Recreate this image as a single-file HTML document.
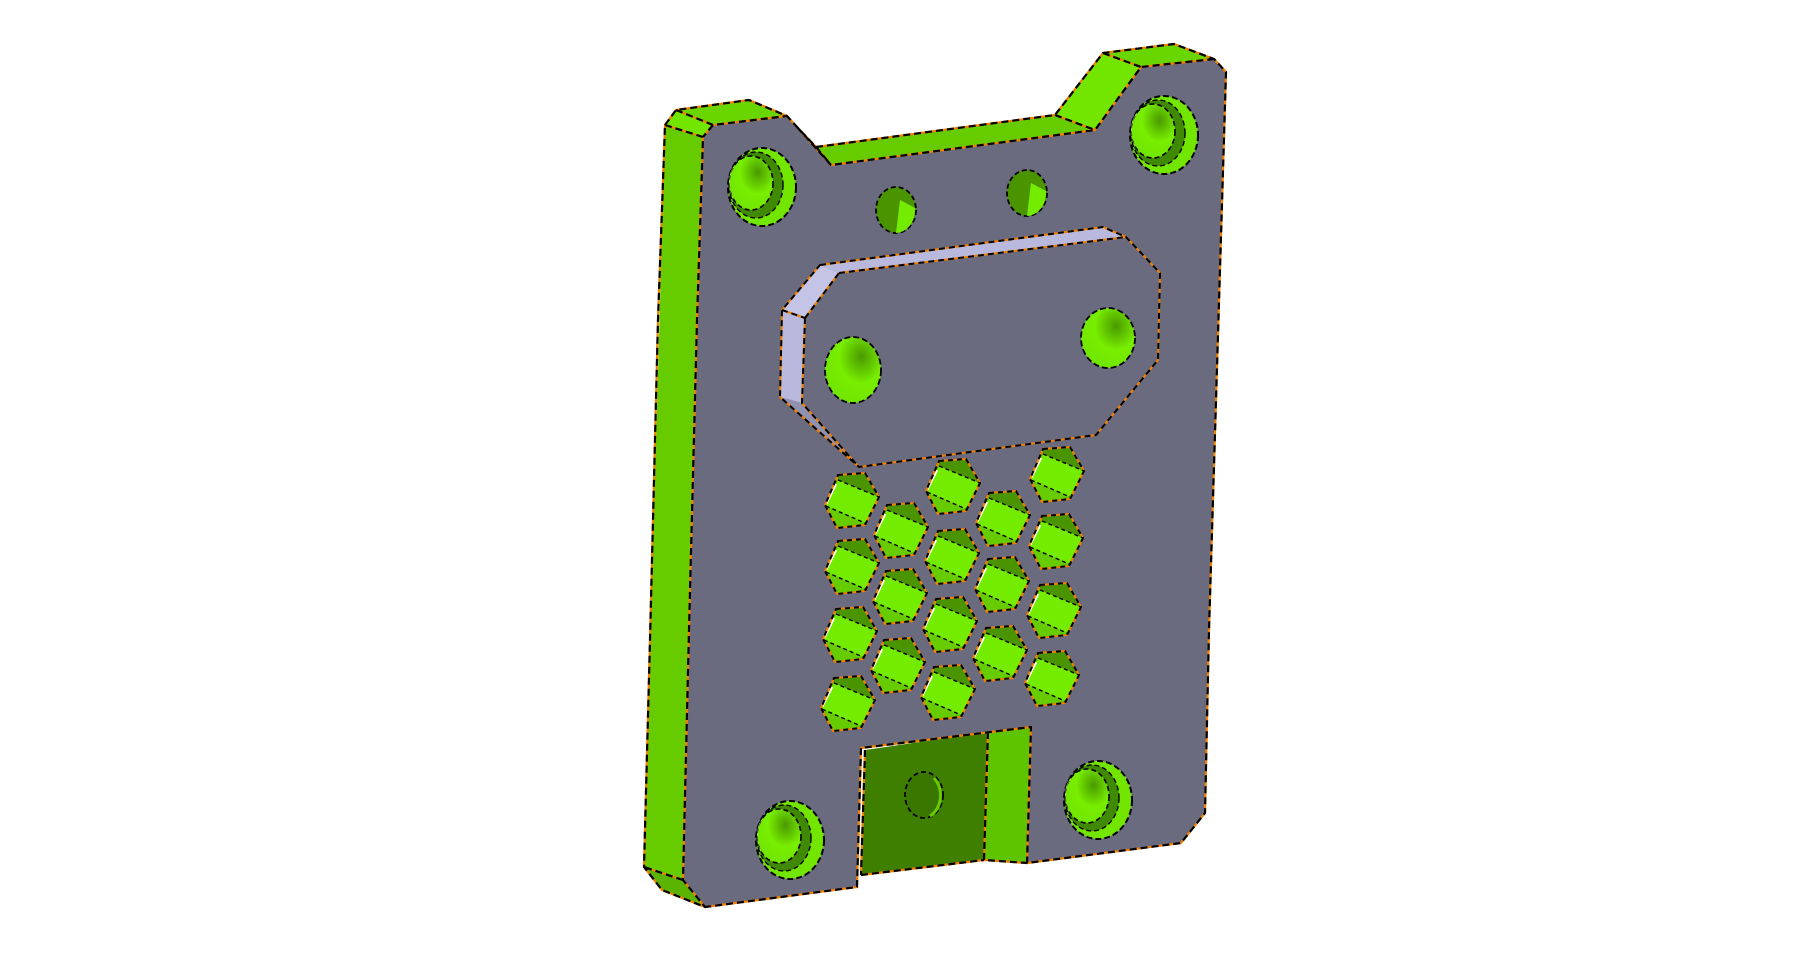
<!DOCTYPE html>
<html><head><meta charset="utf-8"><style>html,body{margin:0;padding:0;background:#fff;}svg{display:block}</style></head>
<body>
<svg width="1820" height="962" viewBox="0 0 1820 962" xmlns="http://www.w3.org/2000/svg">
<defs>
<radialGradient id="hg" cx="0.65" cy="0.3" r="0.8"><stop offset="0" stop-color="#4a9a00"/><stop offset="0.5" stop-color="#78ee00"/><stop offset="1" stop-color="#70e400"/></radialGradient>
<g id="hex">
<polygon points="-14,-25 13,-27 27,-3 13,25 -15,28 -27,5" fill="#5cb800"/>
<polygon points="-14,-25 13,-27 27,-3 -14,-20" fill="#4a9400"/>
<polygon points="-14,-20 27,-3 13,23 -26,6" fill="#74ec00"/>
<polygon points="-26,6 13,23 -15,28" fill="#66cc00"/>
<line x1="-16" y1="-16" x2="-26" y2="4" stroke="#fff" stroke-width="2.5"/>
<polygon points="-14,-25 13,-27 27,-3 13,25 -15,28 -27,5" fill="none" stroke="#f08000" stroke-width="2"/>
<polygon points="-14,-25 13,-27 27,-3 13,25 -15,28 -27,5" fill="none" stroke="#000" stroke-width="2" stroke-dasharray="5 4"/>
<path d="M-14,-20 L27,-3 M-26,6 L13,23" stroke="#000" stroke-width="1.4" stroke-dasharray="4 3" fill="none"/>
</g>
<g id="cb">
<ellipse cx="0" cy="0" rx="34" ry="39" fill="#73e600" stroke="#000" stroke-width="2" stroke-dasharray="6 3"/>
<ellipse cx="-6" cy="-2" rx="27" ry="33" fill="#3f8a00" stroke="#000" stroke-width="1.4" stroke-dasharray="5 3"/>
<ellipse cx="-11" cy="-4" rx="22" ry="27" fill="url(#hg)" stroke="#000" stroke-width="1.6" stroke-dasharray="5 3"/>
<path d="M-27,-22 A22,27 0 0 0 -28,13 A14,22 0 0 1 -27,-22Z" fill="#fff"/>
</g>
</defs>
<g stroke-linejoin="round">
<polygon points="665,125 703,137 683,880 644,867" fill="#66cc00"/>
<polygon points="665,125 676,110 713,125 703,137" fill="#73e600"/>
<polygon points="644,867 683,880 705,907 662,890" fill="#5ab400"/>
<polygon points="676,110 749,100 787,116 713,125" fill="#6ad600"/>
<polygon points="797,127 816,147 1055,115 1095,130 831,165" fill="#66cc00"/>
<polygon points="1055,115 1103,53 1141,67 1095,130" fill="#73e600"/>
<polygon points="1103,53 1174,44 1214,59 1141,67" fill="#6ad600"/>
<polygon points="703,137 713,125 787,116 797,127 831,165 1095,130 1141,67 1214,59 1226,72 1209,630 1205,813 1181,843 1027,863 1031,727 861,748 857,887 705,907 683,880 689,630 697,320" fill="#6b6b80"/>
<polygon points="865,750 988,732 984,860 861,875" fill="#3f7f00"/>
<polygon points="988,732 1031,727 1027,863 984,860" fill="#5fc400"/>
<ellipse cx="924" cy="795" rx="19" ry="23" fill="#3a7700" stroke="#000" stroke-width="1.8" stroke-dasharray="5 3"/>
<path d="M934,778 A19,23 0 0 1 930,816" stroke="#66cc00" stroke-width="3" fill="none"/>
<polygon points="820,265 1103,227 1126,237 839,273" fill="#b9b9dd"/>
<polygon points="820,265 839,273 805,318 782,310" fill="#c4c4e6"/>
<polygon points="782,310 805,318 802,403 780,397" fill="#b9b9dd"/>
<polygon points="780,397 802,403 859,467" fill="#9090b0"/>
<polygon points="839,273 1126,237 1160,273 1158,360 1096,435 859,467 802,403 805,318" fill="#6b6b80"/>
<g fill="none" stroke-width="2">
<path d="M820,265 L1103,227 L1126,237 L1160,273 L1158,360 L1096,435 L859,467 L780,397 L782,310 Z M839,273 L1126,237 M805,318 L839,273 M805,318 L802,403 L859,467 M782,310 L805,318" stroke="#f08000"/>
<path d="M820,265 L1103,227 L1126,237 L1160,273 L1158,360 L1096,435 L859,467 L780,397 L782,310 Z M839,273 L1126,237 M805,318 L839,273 M805,318 L802,403 L859,467 M782,310 L805,318" stroke="#000" stroke-dasharray="6 4"/>
</g>
<ellipse cx="853" cy="370" rx="28" ry="33" fill="url(#hg)" stroke="#000" stroke-width="1.8" stroke-dasharray="6 3"/>
<ellipse cx="1108" cy="338" rx="27" ry="30" fill="url(#hg)" stroke="#000" stroke-width="1.8" stroke-dasharray="6 3"/>
<use href="#cb" x="762" y="187"/>
<use href="#cb" x="1164" y="135"/>
<use href="#cb" x="790" y="840"/>
<use href="#cb" x="1098" y="800"/>
<ellipse cx="896" cy="210" rx="20" ry="23" fill="#4a9400" stroke="#000" stroke-width="1.8" stroke-dasharray="5 3"/>
<path d="M900,200 L915,208 A20,23 0 0 1 896,233 Z" fill="#74ec00"/>
<ellipse cx="1027" cy="193" rx="20" ry="23" fill="#4a9400" stroke="#000" stroke-width="1.8" stroke-dasharray="5 3"/>
<path d="M1031,183 L1046,191 A20,23 0 0 1 1027,216 Z" fill="#74ec00"/>
<use href="#hex" x="852" y="500"/><use href="#hex" x="852" y="566"/><use href="#hex" x="850" y="634"/><use href="#hex" x="848" y="703"/>
<use href="#hex" x="901" y="530"/><use href="#hex" x="900" y="596"/><use href="#hex" x="898" y="665"/>
<use href="#hex" x="953" y="486"/><use href="#hex" x="952" y="556"/><use href="#hex" x="950" y="624"/><use href="#hex" x="948" y="692"/>
<use href="#hex" x="1003" y="518"/><use href="#hex" x="1002" y="584"/><use href="#hex" x="1000" y="653"/>
<use href="#hex" x="1057" y="474"/><use href="#hex" x="1056" y="541"/><use href="#hex" x="1054" y="610"/><use href="#hex" x="1052" y="678"/>
<g fill="none" stroke-width="2.2">
<path d="M665,125 L676,110 L749,100 L787,116 L797,127 L816,147 L1055,115 L1103,53 L1174,44 L1214,59 L1226,72 L1209,630 L1205,813 L1181,843 L1027,863 L1031,727 L861,748 L857,887 L705,907 L662,890 L644,867 L650,640 L658,320 Z M676,110 L713,125 L787,116 M665,125 L703,137 L697,320 L689,630 L683,880 L705,907 M683,880 L644,867 M713,125 L703,137 M797,127 L831,165 L1095,130 L1141,67 L1214,59 M816,147 L831,165 M1055,115 L1095,130 M1103,53 L1141,67 M865,750 L861,875 M988,732 L984,860 L1027,863 M861,875 L984,860" stroke="#f08000"/>
<path d="M665,125 L676,110 L749,100 L787,116 L797,127 L816,147 L1055,115 L1103,53 L1174,44 L1214,59 L1226,72 L1209,630 L1205,813 L1181,843 L1027,863 L1031,727 L861,748 L857,887 L705,907 L662,890 L644,867 L650,640 L658,320 Z M676,110 L713,125 L787,116 M665,125 L703,137 L697,320 L689,630 L683,880 L705,907 M683,880 L644,867 M713,125 L703,137 M797,127 L831,165 L1095,130 L1141,67 L1214,59 M816,147 L831,165 M1055,115 L1095,130 M1103,53 L1141,67 M865,750 L861,875 M988,732 L984,860 L1027,863 M861,875 L984,860" stroke="#000" stroke-dasharray="7 4"/>
</g>
</g>
</svg>
</body></html>
